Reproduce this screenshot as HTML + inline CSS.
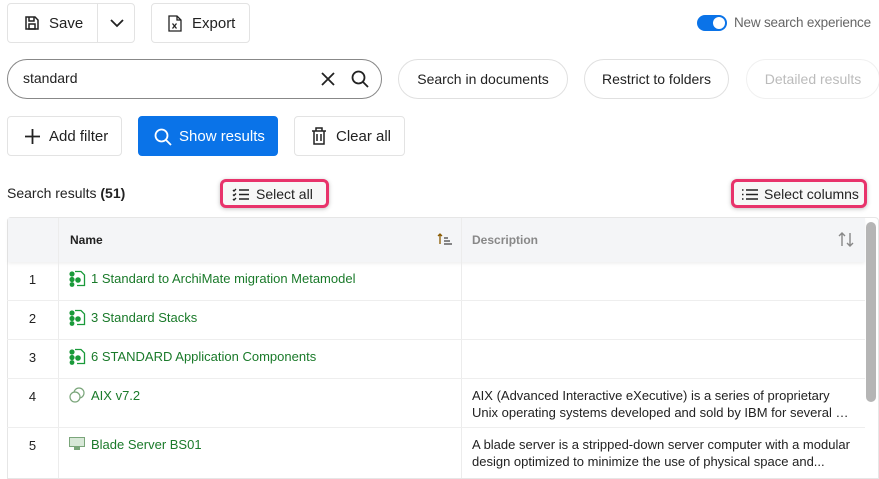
<!DOCTYPE html>
<html><head><meta charset="utf-8"><style>
*{box-sizing:border-box;margin:0;padding:0}
body{width:879px;height:478px;overflow:hidden;background:#fff;font-family:"Liberation Sans",Arial,sans-serif;font-size:14px;color:#222;position:relative}
.a{position:absolute;white-space:nowrap}
.btn{position:absolute;border:1px solid #e3e3e3;border-radius:4px;background:#fff;display:flex;align-items:center;font-size:15px;color:#222}
.pill{position:absolute;border:1px solid #e0e0e0;border-radius:20px;display:flex;align-items:center;justify-content:center;font-size:14px;color:#222;height:40px;top:59px;white-space:nowrap}
svg{display:block}
.hl{position:absolute;border:3px solid #e8336b;border-radius:6px;box-shadow:0 1px 4px rgba(0,0,0,.25);display:flex;align-items:center;font-size:14px;background:#f7f7f7}
.row{position:absolute;left:7px;width:858px;border-bottom:1px solid #eee}
.num{position:absolute;left:0;width:51px;text-align:center;font-size:13px}
.nm{position:absolute;color:#1a7a2a;font-size:13px;white-space:nowrap}
.ds{position:absolute;font-size:13px;line-height:17px;color:#222;white-space:nowrap}
</style></head><body>

<div class="btn" style="left:7px;top:3px;width:128px;height:40px">
 <svg class="a" style="left:16px;top:11px" width="16" height="16" viewBox="0 0 16 16" fill="none" stroke="#222" stroke-width="1.5"><path d="M2 2h9l3 3v9H2z"/><path d="M5 2v4h5V2"/><rect x="5" y="9" width="6" height="5"/></svg>
 <span class="a" style="left:41px;top:11px">Save</span>
 <div class="a" style="left:89px;top:0;width:1px;height:38px;background:#e3e3e3"></div>
 <svg class="a" style="left:101px;top:13px" width="16" height="12" viewBox="0 0 16 12" fill="none" stroke="#222" stroke-width="1.8"><path d="M2 3l6 6 6-6"/></svg>
</div>
<div class="btn" style="left:151px;top:3px;width:99px;height:40px">
 <svg class="a" style="left:16px;top:11px" width="14" height="17" viewBox="0 0 14 17" fill="none" stroke="#222" stroke-width="1.3"><path d="M1 1h8l4 4v11H1z"/><path d="M9 1v4h4"/><path d="M4.5 8.5l4 5M8.5 8.5l-4 5"/></svg>
 <span class="a" style="left:40px;top:11px">Export</span>
</div>

<div class="a" style="left:697px;top:15px;width:30px;height:16px;border-radius:8px;background:#0a73e8"></div>
<div class="a" style="left:713px;top:17px;width:12px;height:12px;border-radius:6px;background:#fff"></div>
<span class="a" style="left:734px;top:15px;font-size:13.5px;color:#666;letter-spacing:-0.2px">New search experience</span>

<div class="a" style="left:7px;top:59px;width:375px;height:40px;border:1px solid #888;border-radius:20px"></div>
<span class="a" style="left:23px;top:70px;font-size:14px">standard</span>
<svg class="a" style="left:320px;top:71px" width="16" height="16" viewBox="0 0 16 16" stroke="#222" stroke-width="1.8"><path d="M2 2l12 12M14 2L2 14"/></svg>
<svg class="a" style="left:351px;top:70px" width="18" height="18" viewBox="0 0 18 18" fill="none" stroke="#222" stroke-width="1.8"><circle cx="7.5" cy="7.5" r="6"/><path d="M12 12l5 5"/></svg>

<div class="pill" style="left:398px;width:170px">Search in documents</div>
<div class="pill" style="left:584px;width:145px">Restrict to folders</div>
<div class="pill" style="left:746px;width:134px;color:#bbb;border-color:#f0f0f0">Detailed results</div>

<div class="btn" style="left:7px;top:116px;width:115px;height:40px">
 <svg class="a" style="left:16px;top:11px" width="17" height="17" viewBox="0 0 17 17" stroke="#222" stroke-width="1.8"><path d="M8.5 1v15M1 8.5h15"/></svg>
 <span class="a" style="left:41px;top:11px">Add filter</span>
</div>
<div class="btn" style="left:138px;top:116px;width:140px;height:40px;background:#0a73e8;border-color:#0a73e8;color:#fff">
 <svg class="a" style="left:15px;top:11px" width="18" height="18" viewBox="0 0 18 18" fill="none" stroke="#fff" stroke-width="1.8"><circle cx="7.5" cy="7.5" r="6"/><path d="M12 12l5 5"/></svg>
 <span class="a" style="left:40px;top:11px">Show results</span>
</div>
<div class="btn" style="left:294px;top:116px;width:111px;height:40px">
 <svg class="a" style="left:16px;top:10px" width="16" height="18" viewBox="0 0 16 18" fill="none" stroke="#222" stroke-width="1.5"><path d="M1 4h14M5 4V1h6v3M3 4v13h10V4M6 7v7M10 7v7"/></svg>
 <span class="a" style="left:41px;top:11px">Clear all</span>
</div>

<span class="a" style="left:7px;top:185px;font-size:14px">Search results <b>(51)</b></span>
<div class="hl" style="left:220px;top:179px;width:109px;height:29px">
 <svg class="a" style="left:9px;top:6px" width="18" height="13" viewBox="0 0 18 13" fill="none" stroke="#222" stroke-width="1.4"><path d="M1 2l1 1 2-2M1 6.5l1 1 2-2M1 11l1 1 2-2M7 2h10M7 6.5h10M7 11h10"/></svg>
 <span class="a" style="left:33px;top:4px">Select all</span>
</div>
<div class="hl" style="left:731px;top:179px;width:136px;height:29px">
 <svg class="a" style="left:7px;top:6px" width="18" height="13" viewBox="0 0 18 13" fill="none" stroke="#222" stroke-width="1.5"><path d="M1 2h1.5M1 6.5h1.5M1 11h1.5M5 2h12M5 6.5h12M5 11h12"/></svg>
 <span class="a" style="left:30px;top:4px">Select columns</span>
</div>

<div class="a" style="left:7px;top:217px;width:872px;height:262px;border:1px solid #e6e6e6;border-radius:4px 4px 0 0"></div>
<div class="a" style="left:8px;top:218px;width:857px;height:44px;background:#f4f5f7;box-shadow:0 2px 3px rgba(0,0,0,.06)"></div>
<div class="a" style="left:58px;top:218px;width:1px;height:260px;background:#ececec"></div>
<div class="a" style="left:461px;top:218px;width:1px;height:260px;background:#ececec"></div>
<span class="a" style="left:70px;top:233px;font-size:12px;font-weight:bold;color:#222">Name</span>
<svg class="a" style="left:437px;top:233px" width="15" height="12" viewBox="0 0 15 12" fill="none" stroke-width="1.3"><path d="M3 11V1M1 3l2-2 2 2" stroke="#8a5a00"/><path d="M7 5h4M7 8h6M7 11h8" stroke="#444"/></svg>
<span class="a" style="left:472px;top:233px;font-size:12px;font-weight:bold;color:#888">Description</span>
<svg class="a" style="left:838px;top:232px" width="16" height="15" viewBox="0 0 16 15" fill="none" stroke="#888" stroke-width="1.4"><path d="M4 14V1M1 4l3-3 3 3M12 1v13M9 11l3 3 3-3"/></svg>
<div class="a" style="left:866px;top:222px;width:10px;height:180px;border-radius:5px;background:#b5b5b5"></div>

<div class="row" style="top:262px;height:39px"><span class="num" style="top:10px">1</span></div>
<div class="row" style="top:301px;height:39px"><span class="num" style="top:10px">2</span></div>
<div class="row" style="top:340px;height:39px"><span class="num" style="top:10px">3</span></div>
<div class="row" style="top:379px;height:49px"><span class="num" style="top:10px">4</span></div>
<div class="row" style="top:428px;height:50px;border:none"><span class="num" style="top:10px">5</span></div>

<svg class="a" style="left:69px;top:270px" width="17" height="17" viewBox="0 0 17 17"><path d="M6 1.5h6l3.5 3.5v10.5H8" fill="none" stroke="#1a9a3a" stroke-width="1.3"/><circle cx="3" cy="4" r="2.6" fill="#1a9a3a"/><circle cx="3" cy="9.5" r="2.6" fill="#1a9a3a"/><circle cx="3" cy="14.5" r="2.4" fill="#1a9a3a"/><circle cx="9" cy="10" r="2.8" fill="#1a9a3a"/></svg>
<span class="nm" style="left:91px;top:271px">1 Standard to ArchiMate migration Metamodel</span>
<svg class="a" style="left:69px;top:309px" width="17" height="17" viewBox="0 0 17 17"><path d="M6 1.5h6l3.5 3.5v10.5H8" fill="none" stroke="#1a9a3a" stroke-width="1.3"/><circle cx="3" cy="4" r="2.6" fill="#1a9a3a"/><circle cx="3" cy="9.5" r="2.6" fill="#1a9a3a"/><circle cx="3" cy="14.5" r="2.4" fill="#1a9a3a"/><circle cx="9" cy="10" r="2.8" fill="#1a9a3a"/></svg>
<span class="nm" style="left:91px;top:310px">3 Standard Stacks</span>
<svg class="a" style="left:69px;top:348px" width="17" height="17" viewBox="0 0 17 17"><path d="M6 1.5h6l3.5 3.5v10.5H8" fill="none" stroke="#1a9a3a" stroke-width="1.3"/><circle cx="3" cy="4" r="2.6" fill="#1a9a3a"/><circle cx="3" cy="9.5" r="2.6" fill="#1a9a3a"/><circle cx="3" cy="14.5" r="2.4" fill="#1a9a3a"/><circle cx="9" cy="10" r="2.8" fill="#1a9a3a"/></svg>
<span class="nm" style="left:91px;top:349px">6 STANDARD Application Components</span>
<svg class="a" style="left:69px;top:387px" width="16" height="16" viewBox="0 0 16 16" stroke="#7aa57a" stroke-width="1.2"><circle cx="10" cy="6" r="5" fill="#fff"/><circle cx="6" cy="10" r="5" fill="#fff"/></svg>
<span class="nm" style="left:91px;top:388px">AIX v7.2</span>
<svg class="a" style="left:69px;top:437px" width="16" height="14" viewBox="0 0 16 14"><rect x="0.5" y="0.5" width="15" height="9" fill="#d8e8d8" stroke="#7aa57a"/><rect x="5" y="10" width="6" height="3" fill="#7aa57a"/></svg>
<span class="nm" style="left:91px;top:437px">Blade Server BS01</span>

<div class="ds" style="left:472px;top:387px">AIX (Advanced Interactive eXecutive) is a series of proprietary<br>Unix operating systems developed and sold by IBM for several …</div>
<div class="ds" style="left:472px;top:436px">A blade server is a stripped-down server computer with a modular<br>design optimized to minimize the use of physical space and...</div>
</body></html>
